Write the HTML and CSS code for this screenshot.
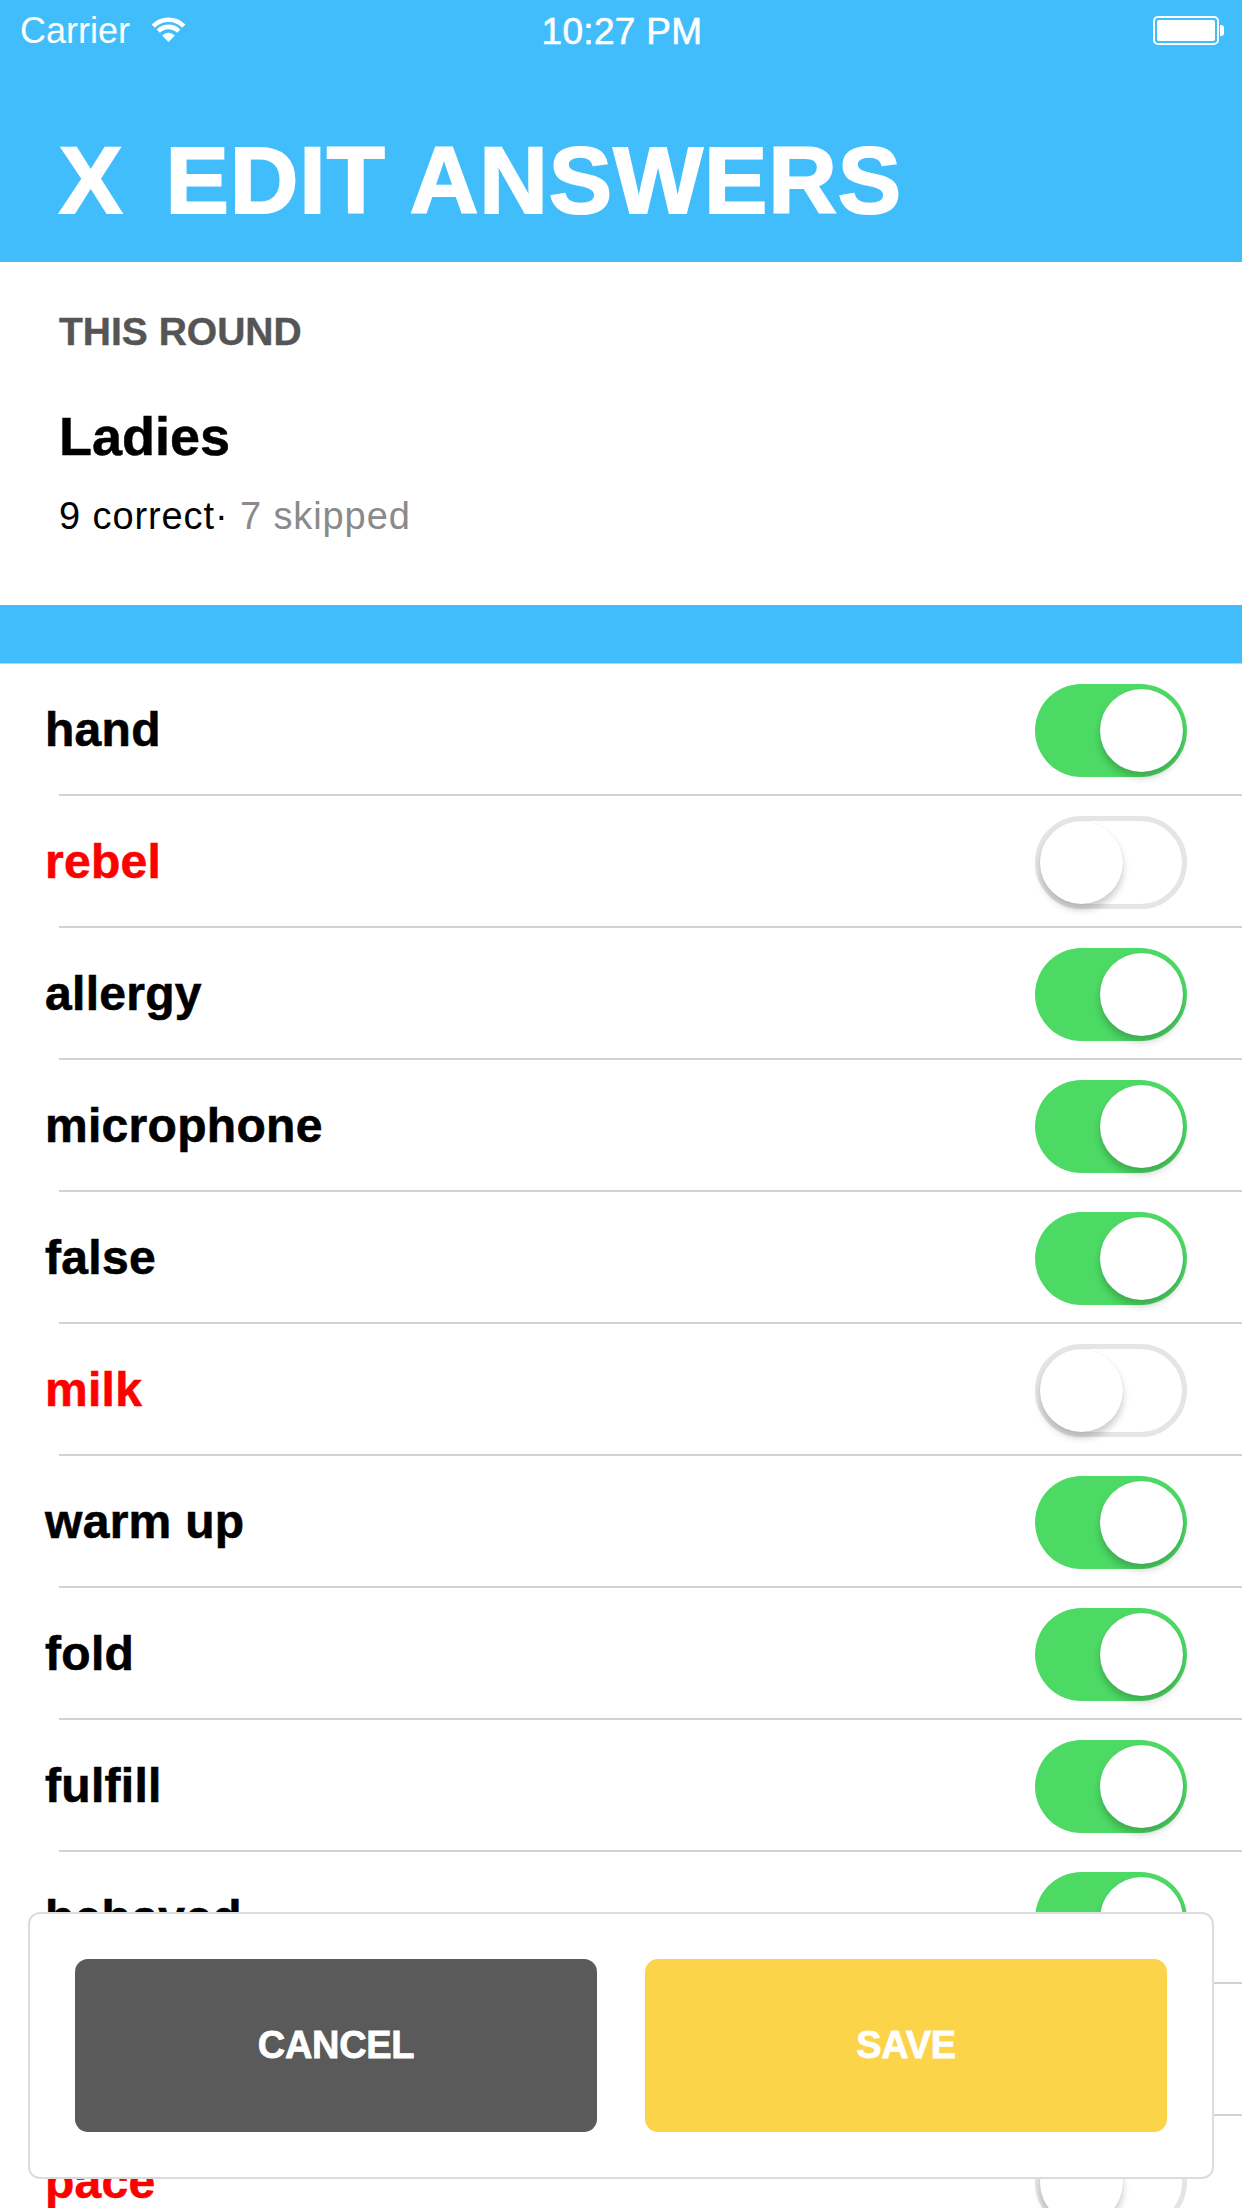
FILE: index.html
```html
<!DOCTYPE html>
<html lang="en">
<head>
<meta charset="utf-8">
<title>Edit Answers</title>
<link rel="stylesheet" href="styles.css">
</head>
<body>
<div class="screen">
  <header class="topbar">
    <div class="status">
      <div class="status-left">
        <span class="carrier">Carrier</span>
        <svg class="wifi" width="37" height="26" viewBox="0 0 37 26" aria-hidden="true">
          <path d="M18.5 26 L12.2 19.4 A9 9 0 0 1 24.8 19.4 Z" fill="#fff"/>
          <path d="M8.2 15.2 A14.5 14.5 0 0 1 28.8 15.2" fill="none" stroke="#fff" stroke-width="4.6"/>
          <path d="M3.2 10.2 A21.5 21.5 0 0 1 33.8 10.2" fill="none" stroke="#fff" stroke-width="4.6"/>
        </svg>
      </div>
      <div class="time">10:27 PM</div>
      <div class="status-right">
        <div class="battery"><div class="battery-fill"></div></div>
        <div class="battery-tip"></div>
      </div>
    </div>
    <h1 class="title"><span class="close">X</span><span>EDIT ANSWERS</span></h1>
  </header>

  <section class="summary">
    <div class="label">THIS ROUND</div>
    <div class="round-name">Ladies</div>
    <div class="stats"><span class="correct">9 correct·</span><span class="skipped"> 7 skipped</span></div>
  </section>

  <div class="band"></div>

  <ul class="answers">
    <li class="row"><span class="word">hand</span><span class="toggle on"><span class="knob"></span></span></li>
    <li class="row"><span class="word wrong">rebel</span><span class="toggle off"><span class="knob"></span></span></li>
    <li class="row"><span class="word">allergy</span><span class="toggle on"><span class="knob"></span></span></li>
    <li class="row"><span class="word">microphone</span><span class="toggle on"><span class="knob"></span></span></li>
    <li class="row"><span class="word">false</span><span class="toggle on"><span class="knob"></span></span></li>
    <li class="row"><span class="word wrong">milk</span><span class="toggle off"><span class="knob"></span></span></li>
    <li class="row"><span class="word">warm up</span><span class="toggle on"><span class="knob"></span></span></li>
    <li class="row"><span class="word">fold</span><span class="toggle on"><span class="knob"></span></span></li>
    <li class="row"><span class="word">fulfill</span><span class="toggle on"><span class="knob"></span></span></li>
    <li class="row"><span class="word">behaved</span><span class="toggle on"><span class="knob"></span></span></li>
    <li class="row"><span class="word">sister</span><span class="toggle on"><span class="knob"></span></span></li>
    <li class="row"><span class="word wrong">pace</span><span class="toggle off"><span class="knob"></span></span></li>
  </ul>

  <div class="dialog">
    <button class="btn cancel">CANCEL</button>
    <button class="btn save">SAVE</button>
  </div>
</div>
</body>
</html>
```

FILE: styles.css
```css
* { box-sizing: border-box; }

html, body {
  margin: 0;
  padding: 0;
  background: #fff;
}

body {
  width: 1242px;
  height: 2208px;
  overflow: hidden;
  font-family: "Liberation Sans", Arial, sans-serif;
}

.screen {
  position: relative;
  width: 1242px;
  height: 2208px;
  overflow: hidden;
}

/* ---------- header ---------- */
.topbar {
  height: 262px;
  background: #42bdfc;
  color: #fff;
}

.status {
  height: 60px;
  display: flex;
  align-items: center;
  justify-content: space-between;
  padding: 0 18px 0 20px;
}

.status-left {
  display: flex;
  align-items: center;
  gap: 20px;
  width: 300px;
}

.carrier {
  font-size: 36px;
  line-height: 1;
  padding-top: 2px;
}

.wifi { display: block; margin-top: -2px; }

.time {
  font-size: 37px;
  line-height: 1;
  letter-spacing: 0.3px;
  padding-top: 2px;
  -webkit-text-stroke: 0.6px #fff;
}

.status-right {
  width: 300px;
  display: flex;
  justify-content: flex-end;
  align-items: center;
}

.battery {
  width: 66px;
  height: 29px;
  border: 2px solid #fff;
  border-radius: 5px;
  padding: 2px;
}

.battery-fill {
  width: 100%;
  height: 100%;
  background: #fff;
  border-radius: 2px;
}

.battery-tip {
  width: 4px;
  height: 11px;
  background: #fff;
  border-radius: 0 3px 3px 0;
  margin-left: 1px;
}

.title {
  margin: 73px 0 0 59px;
  display: flex;
  gap: 42px;
  font-size: 95px;
  line-height: 95px;
  font-weight: 700;
  letter-spacing: 1px;
  -webkit-text-stroke: 2px #fff;
}

/* ---------- summary ---------- */
.summary {
  height: 343px;
  padding: 50px 0 0 59px;
}

.label {
  font-size: 39px;
  line-height: 39px;
  font-weight: 700;
  color: #555;
  -webkit-text-stroke: 0.4px #555;
}

.round-name {
  margin-top: 58px;
  font-size: 54px;
  line-height: 54px;
  font-weight: 700;
  color: #000;
  -webkit-text-stroke: 0.5px #000;
}

.stats {
  margin-top: 34px;
  font-size: 38px;
  line-height: 38px;
  letter-spacing: 0.9px;
  color: #000;
}

.skipped { color: #8a8a8a; }

.band {
  height: 59px;
  background: #42bdfc;
  border-bottom: 1px solid #cfcfcf;
}

/* ---------- list ---------- */
.answers {
  list-style: none;
  margin: 0;
  padding: 0;
}

.row {
  position: relative;
  height: 132px;
  display: flex;
  align-items: center;
  justify-content: space-between;
  padding: 0 55px 0 45px;
}

.row::after {
  content: "";
  position: absolute;
  left: 59px;
  right: 0;
  bottom: 0;
  height: 2px;
  background: #d2d2d2;
}

.word {
  font-size: 48px;
  font-weight: 700;
  color: #000;
  padding-bottom: 2px;
  letter-spacing: 0.3px;
  -webkit-text-stroke: 0.6px currentColor;
}

.word.wrong { color: #ff0000; }

.toggle {
  width: 152px;
  height: 93px;
  border-radius: 47px;
  display: flex;
  align-items: center;
}

.toggle.on {
  background: #4cd964;
  padding: 0 4px;
  justify-content: flex-end;
}

.toggle.off {
  background: #fff;
  border: 5px solid #e5e5e5;
  justify-content: flex-start;
}

.knob {
  width: 83px;
  height: 83px;
  border-radius: 50%;
  background: #fff;
  box-shadow: 0 6px 7px rgba(0, 0, 0, 0.2), 0 0 1px rgba(0, 0, 0, 0.12);
}

/* ---------- dialog ---------- */
.dialog {
  position: absolute;
  left: 28px;
  bottom: 29px;
  width: 1186px;
  height: 267px;
  background: #fff;
  border: 2px solid #dcdcdc;
  border-radius: 12px;
  padding: 45px;
  display: flex;
  gap: 48px;
}

.btn {
  flex: 1;
  border: none;
  border-radius: 13px;
  font-family: "Liberation Sans", Arial, sans-serif;
  font-size: 38px;
  font-weight: 700;
  letter-spacing: -0.3px;
  color: #fff;
  padding: 0;
  -webkit-text-stroke: 0.8px #fff;
}

.cancel { background: #5a5a5a; }
.save { background: #fbd44a; }
```
